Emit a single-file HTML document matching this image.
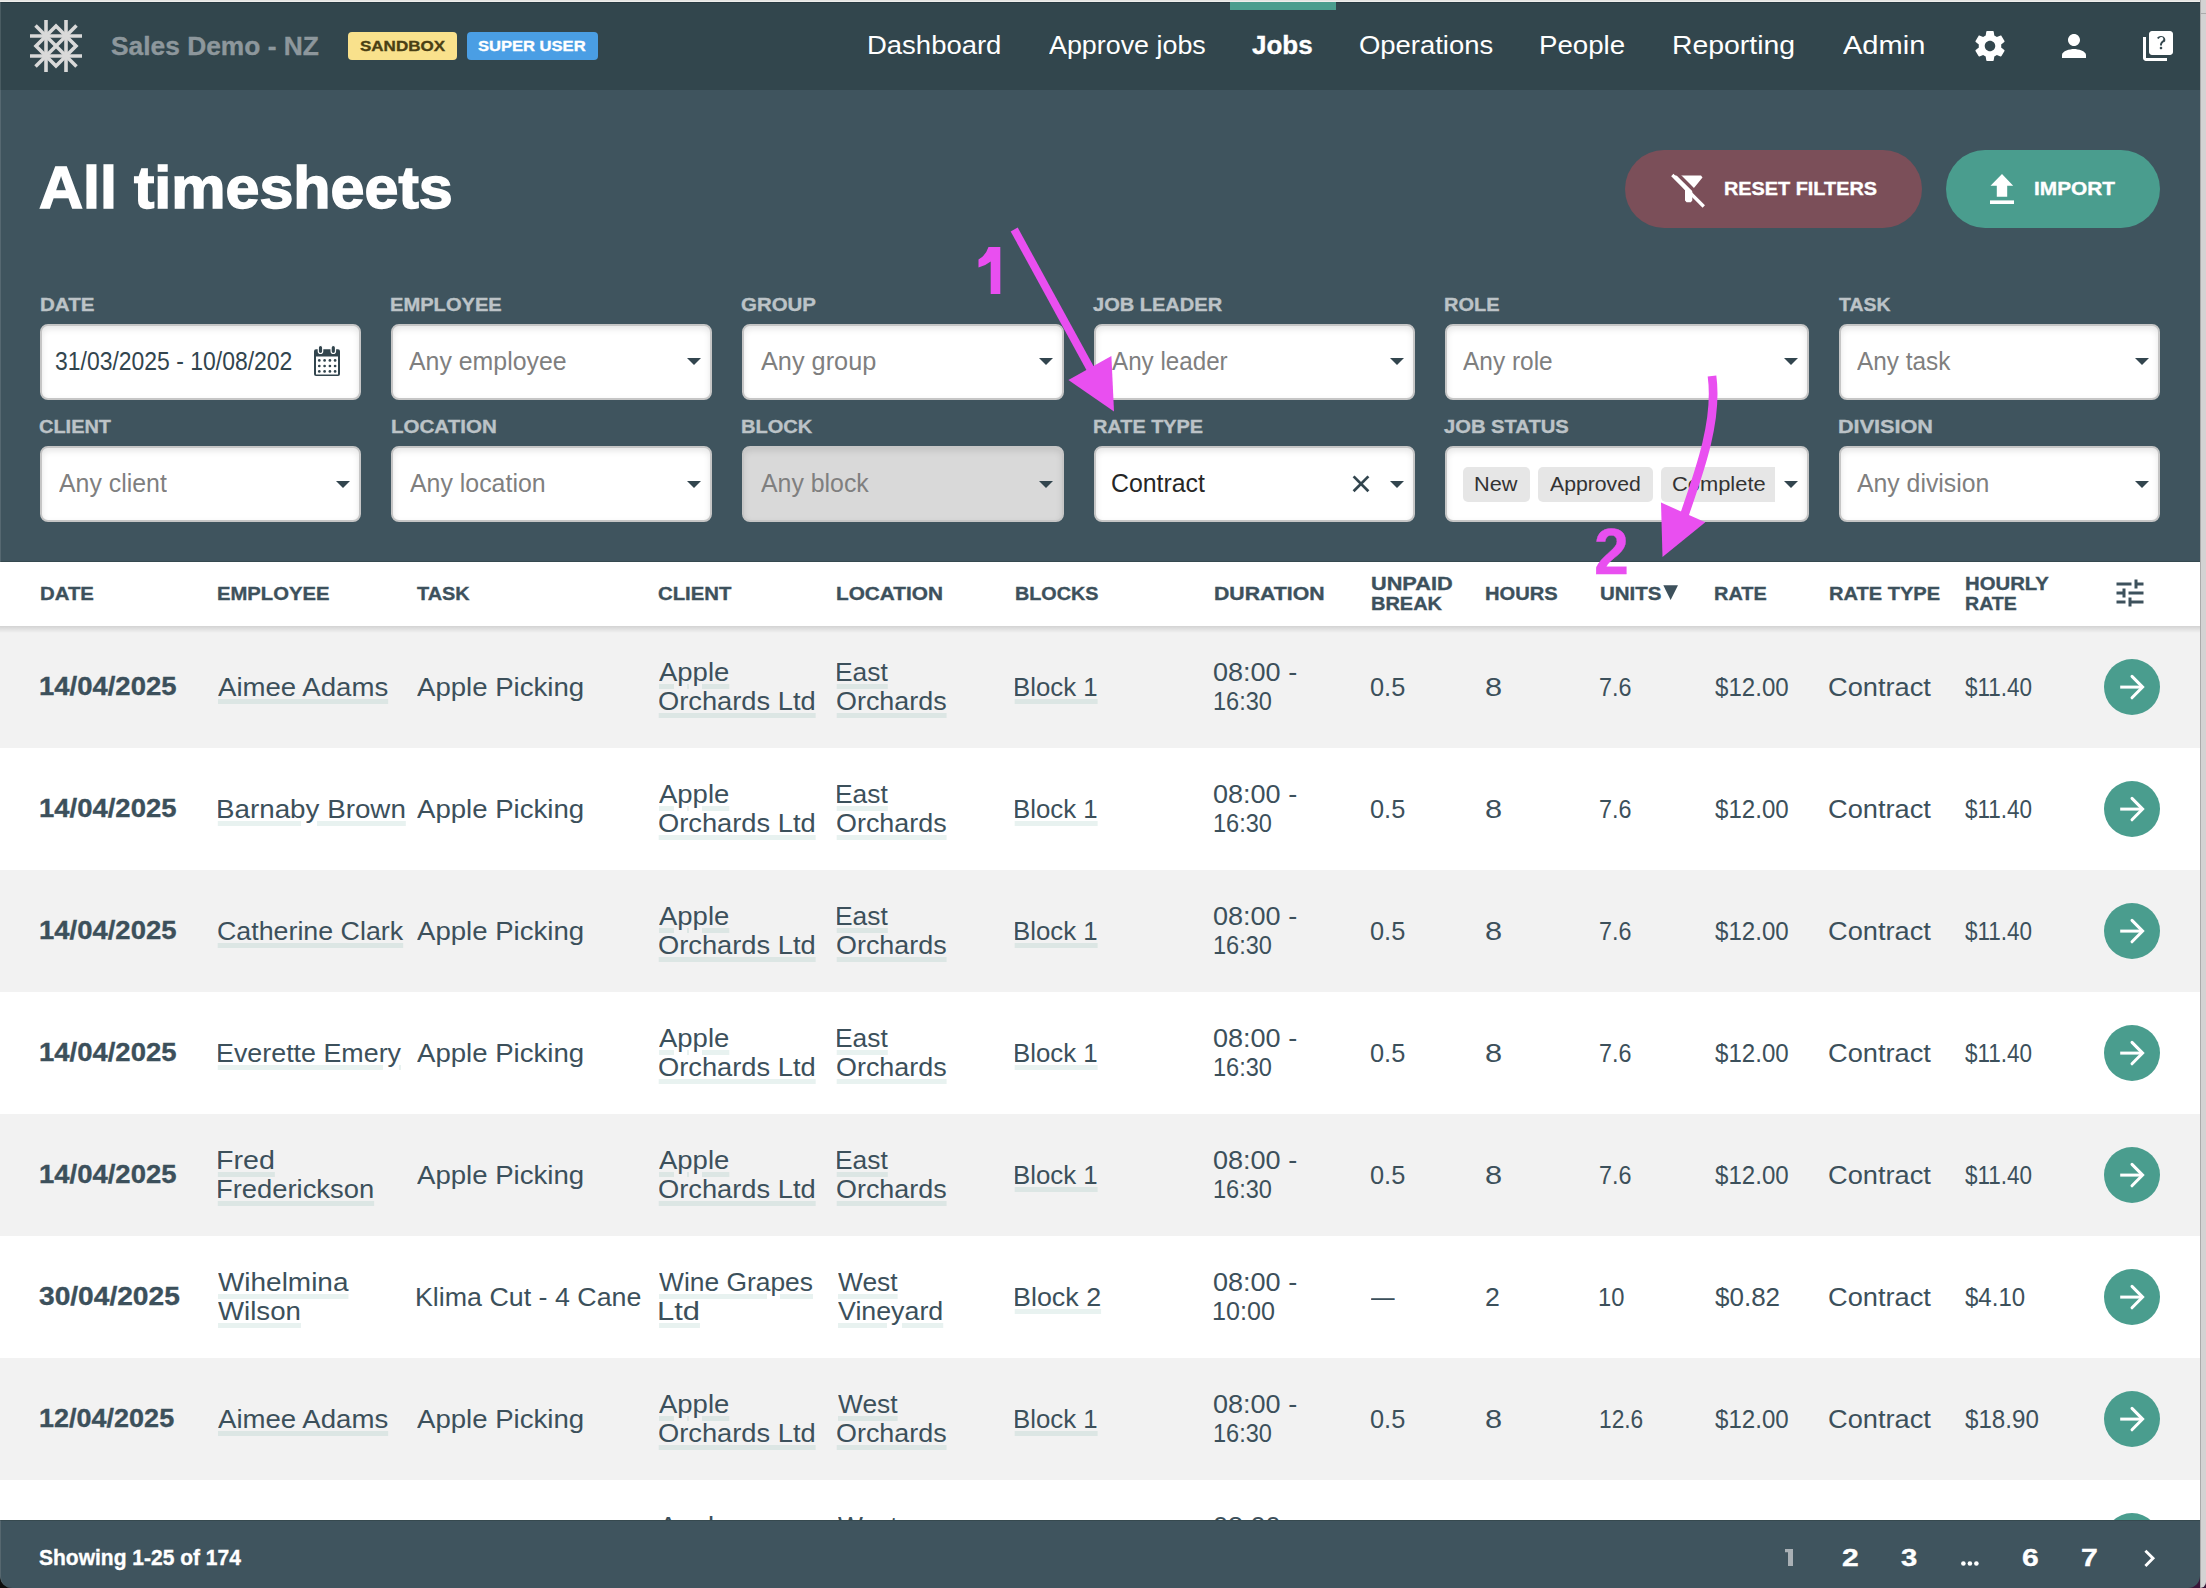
<!DOCTYPE html>
<html><head><meta charset="utf-8"><title>All timesheets</title>
<style>
html,body{margin:0;padding:0}
body{width:2206px;height:1588px;overflow:hidden;position:relative;background:#ffffff;font-family:"Liberation Sans",sans-serif}
div,svg{position:absolute;box-sizing:border-box}
.t{white-space:pre;line-height:1em;transform-origin:0 0}
.box{background:#fff;border:2px solid #c6c6c6;border-radius:8px;box-shadow:inset 0 3px 6px rgba(0,0,0,0.10)}
.caret{width:0;height:0;border-left:7px solid transparent;border-right:7px solid transparent;border-top:7.5px solid #32454e}
.chip{background:#e6e6e6;border-radius:5px;top:467px;height:35px}
.row{left:0;width:2200px;height:122px}
.go{width:56px;height:56px;border-radius:50%;background:#4a9d8e;left:2104px}
</style></head><body>
<div style="left:0;top:0;width:2206px;height:1px;background:#e4e4e2"></div>
<div style="left:0;top:1px;width:2206px;height:1px;background:#efefed"></div>
<div style="left:0;top:2px;width:2200px;height:88px;background:#32464d;border-top:1px solid #283a42"></div>
<div style="left:1230px;top:2px;width:106px;height:8px;background:#4a9d8e"></div>
<div style="left:0;top:90px;width:2200px;height:472px;background:#3f545e"></div>
<svg style="left:0;top:0" width="100" height="90" viewBox="0 0 100 90"><g stroke="#d9d9d9" stroke-width="3.6" fill="none" stroke-linecap="butt"><line x1="46" y1="20" x2="46" y2="72"/><line x1="66" y1="20" x2="66" y2="72"/><line x1="30" y1="36" x2="82" y2="36"/><line x1="30" y1="56" x2="82" y2="56"/><line x1="35.5" y1="25.5" x2="76.5" y2="66.5"/><line x1="76.5" y1="25.5" x2="35.5" y2="66.5"/><polygon points="56,26 76,46 56,66 36,46"/></g></svg>
<div style="left:348px;top:32px;width:109px;height:28px;background:#f9e18c;border-radius:4px"></div>
<div style="left:467px;top:32px;width:131px;height:28px;background:#4a9ee4;border-radius:4px"></div>
<svg style="left:1972px;top:28px" width="36" height="36" viewBox="0 0 24 24"><path fill="#fff" d="M19.43 12.98c.04-.32.07-.64.07-.98s-.03-.66-.07-.98l2.11-1.65c.19-.15.24-.42.12-.64l-2-3.46c-.12-.22-.39-.3-.61-.22l-2.49 1c-.52-.4-1.08-.73-1.69-.98l-.38-2.65C14.46 2.18 14.25 2 14 2h-4c-.25 0-.46.18-.49.42l-.38 2.65c-.61.25-1.17.59-1.69.98l-2.49-1c-.23-.09-.49 0-.61.22l-2 3.46c-.13.22-.07.49.12.64l2.11 1.65c-.04.32-.07.65-.07.98s.03.66.07.98l-2.11 1.65c-.19.15-.24.42-.12.64l2 3.46c.12.22.39.3.61.22l2.49-1c.52.4 1.08.73 1.69.98l.38 2.65c.03.24.24.42.49.42h4c.25 0 .46-.18.49-.42l.38-2.65c.61-.25 1.17-.59 1.69-.98l2.49 1c.23.09.49 0 .61-.22l2-3.46c.12-.22.07-.49-.12-.64l-2.11-1.65zM12 15.5c-1.93 0-3.5-1.57-3.5-3.5s1.57-3.5 3.5-3.5 3.5 1.57 3.5 3.5-1.57 3.5-3.5 3.5z"/></svg>
<svg style="left:2056px;top:28px" width="36" height="36" viewBox="0 0 24 24"><path fill="#fff" d="M12 12c2.21 0 4-1.79 4-4s-1.79-4-4-4-4 1.79-4 4 1.79 4 4 4zm0 2c-2.67 0-8 1.34-8 4v2h16v-2c0-2.66-5.33-4-8-4z"/></svg>
<svg style="left:2140px;top:28px" width="36" height="36" viewBox="0 0 24 24"><path fill="#fff" d="M4 6H2v14c0 1.1.9 2 2 2h14v-2H4V6z"/><path fill="#fff" d="M20 2H8c-1.1 0-2 .9-2 2v12c0 1.1.9 2 2 2h12c1.1 0 2-.9 2-2V4c0-1.1-.9-2-2-2z"/><g transform="translate(14 9.9) scale(0.84) translate(-14 -9.9)"><path fill="#32464d" d="M14.01 15c-.59 0-1.05-.47-1.05-1.05 0-.59.47-1.04 1.05-1.04.59 0 1.04.45 1.04 1.04-.01.58-.45 1.05-1.04 1.05z"/><path fill="#32464d" d="M16.51 8.83c-.63.93-1.23 1.21-1.56 1.81-.13.24-.18.4-.18 1.38h-1.52c0-.51-.08-1.35.33-2.07.51-.91 1.48-1.45 2.04-2.25.59-.84.26-2.43-1.42-2.43-1.1 0-1.64.83-1.87 1.52l-1.54-.65C11.08 5.64 12.24 4.5 14 4.5c1.47 0 2.49.67 3 1.5.44.72.69 2.07.01 3.33z"/></g></svg>
<div style="left:1625px;top:150px;width:297px;height:77.5px;border-radius:39px;background:#7b4f59"></div>
<div style="left:1946px;top:150px;width:214px;height:77.5px;border-radius:39px;background:#4a9d8e"></div>
<svg style="left:1660px;top:165px" width="60" height="50" viewBox="1660 165 60 50"><polygon fill="#fff" points="1673,175.5 1701,175.5 1702.5,177.5 1692.3,190 1692.3,200.5 1690.8,202.3 1686.6,202.3 1685,200.5 1685,190"/><line x1="1675.8" y1="172.2" x2="1705.5" y2="201.9" stroke="#7b4f59" stroke-width="3.4"/><line x1="1673.5" y1="176.2" x2="1702.6" y2="205.3" stroke="#fff" stroke-width="3.3" stroke-linecap="square"/></svg>
<svg style="left:1980px;top:165px" width="50" height="50" viewBox="1980 165 50 50"><g fill="#fff"><polygon points="2002,174 2013.2,185.8 2007.2,185.8 2007.2,196.8 1996.8,196.8 1996.8,185.8 1990.5,185.8"/><rect x="1990" y="200.4" width="24" height="3.6"/></g></svg>
<div class="box" style="left:40px;top:324px;width:321px;height:76px"></div>
<div class="box" style="left:40px;top:446px;width:321px;height:76px;background:#fff"></div>
<div class="caret" style="left:336.3px;top:481px"></div>
<div class="box" style="left:391px;top:324px;width:321px;height:76px"></div>
<div class="box" style="left:391px;top:446px;width:321px;height:76px;background:#fff"></div>
<div class="caret" style="left:687.3px;top:358px"></div>
<div class="caret" style="left:687.3px;top:481px"></div>
<div class="box" style="left:742px;top:324px;width:322px;height:76px"></div>
<div class="box" style="left:742px;top:446px;width:322px;height:76px;background:#d9d9d9"></div>
<div class="caret" style="left:1039.3px;top:358px"></div>
<div class="caret" style="left:1039.3px;top:481px"></div>
<div class="box" style="left:1094px;top:324px;width:321px;height:76px"></div>
<div class="box" style="left:1094px;top:446px;width:321px;height:76px;background:#fff"></div>
<div class="caret" style="left:1390.3px;top:358px"></div>
<div class="caret" style="left:1390.3px;top:481px"></div>
<div class="box" style="left:1445px;top:324px;width:364px;height:76px"></div>
<div class="box" style="left:1445px;top:446px;width:364px;height:76px;background:#fff"></div>
<div class="caret" style="left:1784.3px;top:358px"></div>
<div class="caret" style="left:1784.3px;top:481px"></div>
<div class="box" style="left:1839px;top:324px;width:321px;height:76px"></div>
<div class="box" style="left:1839px;top:446px;width:321px;height:76px;background:#fff"></div>
<div class="caret" style="left:2135.3px;top:358px"></div>
<div class="caret" style="left:2135.3px;top:481px"></div>
<svg style="left:310px;top:343px" width="36" height="38" viewBox="310 343 36 38"><rect x="314" y="349.2" width="26" height="26.8" rx="2" fill="#32454e"/><rect x="316" y="356.5" width="22" height="18" fill="#fff"/><rect x="318.3" y="345.5" width="4.4" height="8" rx="2.2" fill="#32454e" stroke="#fff" stroke-width="1.2"/><rect x="331.1" y="345.5" width="4.4" height="8" rx="2.2" fill="#32454e" stroke="#fff" stroke-width="1.2"/><circle cx="319.3" cy="360.4" r="1.35" fill="#32454e"/><circle cx="319.3" cy="366" r="1.35" fill="#32454e"/><circle cx="319.3" cy="371.4" r="1.35" fill="#32454e"/><circle cx="324.6" cy="360.4" r="1.35" fill="#32454e"/><circle cx="324.6" cy="366" r="1.35" fill="#32454e"/><circle cx="324.6" cy="371.4" r="1.35" fill="#32454e"/><circle cx="329.9" cy="360.4" r="1.35" fill="#32454e"/><circle cx="329.9" cy="366" r="1.35" fill="#32454e"/><circle cx="329.9" cy="371.4" r="1.35" fill="#32454e"/><circle cx="335.1" cy="360.4" r="1.35" fill="#32454e"/><circle cx="335.1" cy="366" r="1.35" fill="#32454e"/><circle cx="335.1" cy="371.4" r="1.35" fill="#32454e"/></svg>
<svg style="left:1350px;top:473px" width="22" height="22" viewBox="1350 473 22 22"><g stroke="#32454e" stroke-width="2.7"><line x1="1353.6" y1="476.4" x2="1368.4" y2="491.2"/><line x1="1368.4" y1="476.4" x2="1353.6" y2="491.2"/></g></svg>
<div class="chip" style="left:1463px;width:66.5px"></div>
<div class="chip" style="left:1538px;width:114.5px"></div>
<div class="chip" style="left:1661.4px;width:113.6px;border-radius:5px 0 0 5px"></div>
<div style="left:0;top:561px;width:2200px;height:1px;background:#35494f"></div>
<div style="left:0;top:2px;width:1px;height:560px;background:rgba(255,255,255,0.12)"></div>
<div style="left:0;top:562px;width:2200px;height:64px;background:#fff"></div>
<div class="row" style="top:626px;background:#f2f2f2"></div>
<div class="row" style="top:748px;background:#ffffff"></div>
<div class="row" style="top:870px;background:#f2f2f2"></div>
<div class="row" style="top:992px;background:#ffffff"></div>
<div class="row" style="top:1114px;background:#f2f2f2"></div>
<div class="row" style="top:1236px;background:#ffffff"></div>
<div class="row" style="top:1358px;background:#f2f2f2"></div>
<div class="row" style="top:1480px;background:#ffffff"></div>
<div style="left:0;top:626px;width:2200px;height:7px;background:linear-gradient(rgba(0,0,0,0.13),rgba(0,0,0,0))"></div>
<svg style="left:1660px;top:582px" width="22" height="22" viewBox="1660 582 22 22"><polygon fill="#3d515c" points="1663.3,585.2 1678,585.2 1670.6,600"/></svg>
<svg style="left:2112.3px;top:574.8px" width="36" height="36" viewBox="0 0 24 24"><path fill="#3d515c" d="M3 17v2h6v-2H3zM3 5v2h10V5H3zm10 16v-2h8v-2h-8v-2h-2v6h2zM7 9v2H3v2h4v2h2V9H7zm14 4v-2H11v2h10zm-6-4h2V7h4V5h-4V3h-2v6z"/></svg>
<div class="go" style="top:659px"></div>
<svg style="left:2110px;top:665px" width="44" height="44" viewBox="2110 665 44 44"><path fill="none" stroke="#fff" stroke-width="3" stroke-linecap="round" stroke-linejoin="miter" d="M2132 676.4 L2142.6 687.1 L2132 697.8"/><path stroke="#fff" stroke-width="3" d="M2120.2 687.1 H2141.5"/></svg>
<div class="go" style="top:781px"></div>
<svg style="left:2110px;top:787px" width="44" height="44" viewBox="2110 787 44 44"><path fill="none" stroke="#fff" stroke-width="3" stroke-linecap="round" stroke-linejoin="miter" d="M2132 798.4 L2142.6 809.1 L2132 819.8"/><path stroke="#fff" stroke-width="3" d="M2120.2 809.1 H2141.5"/></svg>
<div class="go" style="top:903px"></div>
<svg style="left:2110px;top:909px" width="44" height="44" viewBox="2110 909 44 44"><path fill="none" stroke="#fff" stroke-width="3" stroke-linecap="round" stroke-linejoin="miter" d="M2132 920.4 L2142.6 931.1 L2132 941.8"/><path stroke="#fff" stroke-width="3" d="M2120.2 931.1 H2141.5"/></svg>
<div class="go" style="top:1025px"></div>
<svg style="left:2110px;top:1031px" width="44" height="44" viewBox="2110 1031 44 44"><path fill="none" stroke="#fff" stroke-width="3" stroke-linecap="round" stroke-linejoin="miter" d="M2132 1042.4 L2142.6 1053.1 L2132 1063.8"/><path stroke="#fff" stroke-width="3" d="M2120.2 1053.1 H2141.5"/></svg>
<div class="go" style="top:1147px"></div>
<svg style="left:2110px;top:1153px" width="44" height="44" viewBox="2110 1153 44 44"><path fill="none" stroke="#fff" stroke-width="3" stroke-linecap="round" stroke-linejoin="miter" d="M2132 1164.4 L2142.6 1175.1 L2132 1185.8"/><path stroke="#fff" stroke-width="3" d="M2120.2 1175.1 H2141.5"/></svg>
<div class="go" style="top:1269px"></div>
<svg style="left:2110px;top:1275px" width="44" height="44" viewBox="2110 1275 44 44"><path fill="none" stroke="#fff" stroke-width="3" stroke-linecap="round" stroke-linejoin="miter" d="M2132 1286.4 L2142.6 1297.1 L2132 1307.8"/><path stroke="#fff" stroke-width="3" d="M2120.2 1297.1 H2141.5"/></svg>
<div class="go" style="top:1391px"></div>
<svg style="left:2110px;top:1397px" width="44" height="44" viewBox="2110 1397 44 44"><path fill="none" stroke="#fff" stroke-width="3" stroke-linecap="round" stroke-linejoin="miter" d="M2132 1408.4 L2142.6 1419.1 L2132 1429.8"/><path stroke="#fff" stroke-width="3" d="M2120.2 1419.1 H2141.5"/></svg>
<div class="go" style="top:1513px"></div>
<svg style="left:2110px;top:1519px" width="44" height="44" viewBox="2110 1519 44 44"><path fill="none" stroke="#fff" stroke-width="3" stroke-linecap="round" stroke-linejoin="miter" d="M2132 1530.4 L2142.6 1541.1 L2132 1551.8"/><path stroke="#fff" stroke-width="3" d="M2120.2 1541.1 H2141.5"/></svg>
<div class="t" style="left:110.95px;top:34.0px;font-size:25px;font-weight:700;color:#8d979c;transform:scaleX(1.0536);-webkit-text-stroke:0.35px #8d979c;">Sales Demo - NZ</div>
<div class="t" style="left:360.00px;top:38.1px;font-size:15px;font-weight:700;color:#4a3f14;transform:scaleX(1.1333);-webkit-text-stroke:0.35px #4a3f14;">SANDBOX</div>
<div class="t" style="left:478.10px;top:38.1px;font-size:15px;font-weight:700;color:#ffffff;transform:scaleX(1.1031);-webkit-text-stroke:0.35px #ffffff;">SUPER USER</div>
<div class="t" style="left:866.89px;top:32.4px;font-size:26px;font-weight:400;color:#ffffff;transform:scaleX(1.0565);">Dashboard</div>
<div class="t" style="left:1049.00px;top:32.4px;font-size:26px;font-weight:400;color:#ffffff;transform:scaleX(1.0331);">Approve jobs</div>
<div class="t" style="left:1252.00px;top:32.4px;font-size:26px;font-weight:700;color:#ffffff;-webkit-text-stroke:0.35px #ffffff;">Jobs</div>
<div class="t" style="left:1359.34px;top:32.4px;font-size:26px;font-weight:400;color:#ffffff;transform:scaleX(1.0552);">Operations</div>
<div class="t" style="left:1538.87px;top:32.4px;font-size:26px;font-weight:400;color:#ffffff;transform:scaleX(1.0641);">People</div>
<div class="t" style="left:1671.82px;top:32.4px;font-size:26px;font-weight:400;color:#ffffff;transform:scaleX(1.0917);">Reporting</div>
<div class="t" style="left:1842.60px;top:32.4px;font-size:26px;font-weight:400;color:#ffffff;transform:scaleX(1.1167);">Admin</div>
<div class="t" style="left:38.90px;top:158.8px;font-size:59px;font-weight:700;color:#ffffff;transform:scaleX(1.0343);-webkit-text-stroke:1.5px #fff;">All timesheets</div>
<div class="t" style="left:1724.47px;top:179.4px;font-size:19.2px;font-weight:700;color:#ffffff;transform:scaleX(1.0349);-webkit-text-stroke:0.35px #ffffff;">RESET FILTERS</div>
<div class="t" style="left:2034.31px;top:179.4px;font-size:19.2px;font-weight:700;color:#ffffff;transform:scaleX(1.0851);-webkit-text-stroke:0.35px #ffffff;">IMPORT</div>
<div class="t" style="left:39.52px;top:294.7px;font-size:19px;font-weight:700;color:#bcc3c7;transform:scaleX(1.0816);-webkit-text-stroke:0.35px #bcc3c7;">DATE</div>
<div class="t" style="left:390.24px;top:294.7px;font-size:19px;font-weight:700;color:#bcc3c7;transform:scaleX(1.0587);-webkit-text-stroke:0.35px #bcc3c7;">EMPLOYEE</div>
<div class="t" style="left:741.42px;top:294.7px;font-size:19px;font-weight:700;color:#bcc3c7;transform:scaleX(1.0750);-webkit-text-stroke:0.35px #bcc3c7;">GROUP</div>
<div class="t" style="left:1093.35px;top:294.7px;font-size:19px;font-weight:700;color:#bcc3c7;transform:scaleX(1.0545);-webkit-text-stroke:0.35px #bcc3c7;">JOB LEADER</div>
<div class="t" style="left:1443.95px;top:294.7px;font-size:19px;font-weight:700;color:#bcc3c7;transform:scaleX(1.0510);-webkit-text-stroke:0.35px #bcc3c7;">ROLE</div>
<div class="t" style="left:1839.20px;top:294.7px;font-size:19px;font-weight:700;color:#bcc3c7;transform:scaleX(1.0220);-webkit-text-stroke:0.35px #bcc3c7;">TASK</div>
<div class="t" style="left:39.45px;top:417.4px;font-size:19px;font-weight:700;color:#bcc3c7;transform:scaleX(1.0500);-webkit-text-stroke:0.35px #bcc3c7;">CLIENT</div>
<div class="t" style="left:390.72px;top:417.4px;font-size:19px;font-weight:700;color:#bcc3c7;transform:scaleX(1.0813);-webkit-text-stroke:0.35px #bcc3c7;">LOCATION</div>
<div class="t" style="left:741.44px;top:417.4px;font-size:19px;font-weight:700;color:#bcc3c7;transform:scaleX(1.0561);-webkit-text-stroke:0.35px #bcc3c7;">BLOCK</div>
<div class="t" style="left:1093.35px;top:417.4px;font-size:19px;font-weight:700;color:#bcc3c7;transform:scaleX(1.0462);-webkit-text-stroke:0.35px #bcc3c7;">RATE TYPE</div>
<div class="t" style="left:1443.74px;top:417.4px;font-size:19px;font-weight:700;color:#bcc3c7;transform:scaleX(1.0612);-webkit-text-stroke:0.35px #bcc3c7;">JOB STATUS</div>
<div class="t" style="left:1837.86px;top:417.4px;font-size:19px;font-weight:700;color:#bcc3c7;transform:scaleX(1.1383);-webkit-text-stroke:0.35px #bcc3c7;">DIVISION</div>
<div class="t" style="left:54.60px;top:349.2px;font-size:25.6px;font-weight:400;color:#32454e;transform:scaleX(0.8966);">31/03/2025 - 10/08/202</div>
<div class="t" style="left:409.40px;top:349.2px;font-size:25.6px;font-weight:400;color:#7f7f7f;transform:scaleX(0.9720);">Any employee</div>
<div class="t" style="left:760.50px;top:349.2px;font-size:25.6px;font-weight:400;color:#7f7f7f;transform:scaleX(0.9879);">Any group</div>
<div class="t" style="left:1112.40px;top:349.2px;font-size:25.6px;font-weight:400;color:#7f7f7f;transform:scaleX(0.9451);">Any leader</div>
<div class="t" style="left:1462.80px;top:349.2px;font-size:25.6px;font-weight:400;color:#7f7f7f;transform:scaleX(0.9548);">Any role</div>
<div class="t" style="left:1856.70px;top:349.2px;font-size:25.6px;font-weight:400;color:#7f7f7f;transform:scaleX(0.9510);">Any task</div>
<div class="t" style="left:58.60px;top:471.3px;font-size:25.6px;font-weight:400;color:#7f7f7f;transform:scaleX(0.9721);">Any client</div>
<div class="t" style="left:409.90px;top:471.3px;font-size:25.6px;font-weight:400;color:#7f7f7f;transform:scaleX(0.9725);">Any location</div>
<div class="t" style="left:760.50px;top:471.3px;font-size:25.6px;font-weight:400;color:#7f7f7f;transform:scaleX(0.9712);">Any block</div>
<div class="t" style="left:1111.43px;top:471.3px;font-size:25.6px;font-weight:400;color:#262626;transform:scaleX(0.9708);">Contract</div>
<div class="t" style="left:1856.70px;top:471.3px;font-size:25.6px;font-weight:400;color:#7f7f7f;transform:scaleX(0.9689);">Any division</div>
<div class="t" style="left:1473.82px;top:475.2px;font-size:19.9px;font-weight:400;color:#333333;transform:scaleX(1.0921);">New</div>
<div class="t" style="left:1550.25px;top:475.2px;font-size:19.9px;font-weight:400;color:#333333;transform:scaleX(1.0664);">Approved</div>
<div class="t" style="left:1672.32px;top:475.2px;font-size:19.9px;font-weight:400;color:#333333;transform:scaleX(1.1000);">Complete</div>
<div class="t" style="left:39.62px;top:585.0px;font-size:18.9px;font-weight:700;color:#3d515c;transform:scaleX(1.0776);-webkit-text-stroke:0.35px #3d515c;">DATE</div>
<div class="t" style="left:217.33px;top:585.0px;font-size:18.9px;font-weight:700;color:#3d515c;transform:scaleX(1.0709);-webkit-text-stroke:0.35px #3d515c;">EMPLOYEE</div>
<div class="t" style="left:417.00px;top:585.0px;font-size:18.9px;font-weight:700;color:#3d515c;transform:scaleX(1.0520);-webkit-text-stroke:0.35px #3d515c;">TASK</div>
<div class="t" style="left:658.12px;top:585.0px;font-size:18.9px;font-weight:700;color:#3d515c;transform:scaleX(1.0761);-webkit-text-stroke:0.35px #3d515c;">CLIENT</div>
<div class="t" style="left:836.30px;top:585.0px;font-size:18.9px;font-weight:700;color:#3d515c;transform:scaleX(1.1000);-webkit-text-stroke:0.35px #3d515c;">LOCATION</div>
<div class="t" style="left:1014.75px;top:585.0px;font-size:18.9px;font-weight:700;color:#3d515c;transform:scaleX(1.0462);-webkit-text-stroke:0.35px #3d515c;">BLOCKS</div>
<div class="t" style="left:1213.88px;top:585.0px;font-size:18.9px;font-weight:700;color:#3d515c;transform:scaleX(1.1250);-webkit-text-stroke:0.35px #3d515c;">DURATION</div>
<div class="t" style="left:1485.43px;top:585.0px;font-size:18.9px;font-weight:700;color:#3d515c;transform:scaleX(1.0657);-webkit-text-stroke:0.35px #3d515c;">HOURS</div>
<div class="t" style="left:1599.92px;top:585.0px;font-size:18.9px;font-weight:700;color:#3d515c;transform:scaleX(1.0836);-webkit-text-stroke:0.35px #3d515c;">UNITS</div>
<div class="t" style="left:1713.94px;top:585.0px;font-size:18.9px;font-weight:700;color:#3d515c;transform:scaleX(1.0551);-webkit-text-stroke:0.35px #3d515c;">RATE</div>
<div class="t" style="left:1828.54px;top:585.0px;font-size:18.9px;font-weight:700;color:#3d515c;transform:scaleX(1.0621);-webkit-text-stroke:0.35px #3d515c;">RATE TYPE</div>
<div class="t" style="left:1370.75px;top:575.4px;font-size:18.9px;font-weight:700;color:#3d515c;transform:scaleX(1.1493);-webkit-text-stroke:0.35px #3d515c;">UNPAID</div>
<div class="t" style="left:1370.84px;top:595.0px;font-size:18.9px;font-weight:700;color:#3d515c;transform:scaleX(1.0576);-webkit-text-stroke:0.35px #3d515c;">BREAK</div>
<div class="t" style="left:1964.62px;top:575.4px;font-size:18.9px;font-weight:700;color:#3d515c;transform:scaleX(1.0753);-webkit-text-stroke:0.35px #3d515c;">HOURLY</div>
<div class="t" style="left:1964.66px;top:595.0px;font-size:18.9px;font-weight:700;color:#3d515c;transform:scaleX(1.0366);-webkit-text-stroke:0.35px #3d515c;">RATE</div>
<div class="t" style="left:38.93px;top:674.2px;font-size:25.6px;font-weight:700;color:#3c505b;transform:scaleX(1.0732);-webkit-text-stroke:0.35px #3c505b;">14/04/2025</div>
<div class="t" style="left:218.00px;top:675.0px;font-size:25.6px;font-weight:400;color:#3c505b;transform:scaleX(1.0777);clip-path:inset(-20px -20px -20px 0.0px);text-decoration:underline;text-decoration-thickness:5px;text-underline-offset:3px;text-decoration-color:rgba(74,157,141,0.13);">Aimee Adams</div>
<div class="t" style="left:417.30px;top:675.0px;font-size:25.6px;font-weight:400;color:#3c505b;transform:scaleX(1.0779);">Apple Picking</div>
<div class="t" style="left:659.00px;top:660.2px;font-size:25.6px;font-weight:400;color:#3c505b;transform:scaleX(1.0738);clip-path:inset(-20px -20px -20px 0.0px);text-decoration:underline;text-decoration-thickness:5px;text-underline-offset:3px;text-decoration-color:rgba(74,157,141,0.13);">Apple</div>
<div class="t" style="left:657.93px;top:689.0px;font-size:25.6px;font-weight:400;color:#3c505b;transform:scaleX(1.0658);clip-path:inset(-20px -20px -20px 0.7px);text-decoration:underline;text-decoration-thickness:5px;text-underline-offset:3px;text-decoration-color:rgba(74,157,141,0.13);">Orchards Ltd</div>
<div class="t" style="left:835.44px;top:660.2px;font-size:25.6px;font-weight:400;color:#3c505b;transform:scaleX(1.0306);clip-path:inset(-20px -20px -20px 1.7px);text-decoration:underline;text-decoration-thickness:5px;text-underline-offset:3px;text-decoration-color:rgba(74,157,141,0.13);">East</div>
<div class="t" style="left:836.45px;top:689.0px;font-size:25.6px;font-weight:400;color:#3c505b;transform:scaleX(1.0510);clip-path:inset(-20px -20px -20px 0.7px);text-decoration:underline;text-decoration-thickness:5px;text-underline-offset:3px;text-decoration-color:rgba(74,157,141,0.13);">Orchards</div>
<div class="t" style="left:1013.28px;top:675.0px;font-size:25.6px;font-weight:400;color:#3c505b;transform:scaleX(1.0086);clip-path:inset(-20px -20px -20px 1.7px);text-decoration:underline;text-decoration-thickness:5px;text-underline-offset:3px;text-decoration-color:rgba(74,157,141,0.13);">Block 1</div>
<div class="t" style="left:1213.34px;top:660.2px;font-size:25.6px;font-weight:400;color:#3c505b;transform:scaleX(1.0564);">08:00 -</div>
<div class="t" style="left:1212.56px;top:689.0px;font-size:25.6px;font-weight:400;color:#3c505b;transform:scaleX(0.9197);">16:30</div>
<div class="t" style="left:1370.31px;top:675.0px;font-size:25.6px;font-weight:400;color:#3c505b;transform:scaleX(0.9912);">0.5</div>
<div class="t" style="left:1484.80px;top:675.0px;font-size:25.6px;font-weight:400;color:#3c505b;transform:scaleX(1.2000);">8</div>
<div class="t" style="left:1599.39px;top:675.0px;font-size:25.6px;font-weight:400;color:#3c505b;transform:scaleX(0.9118);">7.6</div>
<div class="t" style="left:1714.80px;top:675.0px;font-size:25.6px;font-weight:400;color:#3c505b;transform:scaleX(0.9416);">$12.00</div>
<div class="t" style="left:1965.00px;top:675.0px;font-size:25.6px;font-weight:400;color:#3c505b;transform:scaleX(0.8789);">$11.40</div>
<div class="t" style="left:1828.14px;top:675.0px;font-size:25.6px;font-weight:400;color:#3c505b;transform:scaleX(1.0635);">Contract</div>
<div class="t" style="left:38.93px;top:796.2px;font-size:25.6px;font-weight:700;color:#3c505b;transform:scaleX(1.0732);-webkit-text-stroke:0.35px #3c505b;">14/04/2025</div>
<div class="t" style="left:215.83px;top:797.0px;font-size:25.6px;font-weight:400;color:#3c505b;transform:scaleX(1.0849);clip-path:inset(-20px -20px -20px 1.7px);text-decoration:underline;text-decoration-thickness:5px;text-underline-offset:3px;text-decoration-color:rgba(74,157,141,0.13);">Barnaby Brown</div>
<div class="t" style="left:417.30px;top:797.0px;font-size:25.6px;font-weight:400;color:#3c505b;transform:scaleX(1.0779);">Apple Picking</div>
<div class="t" style="left:659.00px;top:782.2px;font-size:25.6px;font-weight:400;color:#3c505b;transform:scaleX(1.0738);clip-path:inset(-20px -20px -20px 0.0px);text-decoration:underline;text-decoration-thickness:5px;text-underline-offset:3px;text-decoration-color:rgba(74,157,141,0.13);">Apple</div>
<div class="t" style="left:657.93px;top:811.0px;font-size:25.6px;font-weight:400;color:#3c505b;transform:scaleX(1.0658);clip-path:inset(-20px -20px -20px 0.7px);text-decoration:underline;text-decoration-thickness:5px;text-underline-offset:3px;text-decoration-color:rgba(74,157,141,0.13);">Orchards Ltd</div>
<div class="t" style="left:835.44px;top:782.2px;font-size:25.6px;font-weight:400;color:#3c505b;transform:scaleX(1.0306);clip-path:inset(-20px -20px -20px 1.7px);text-decoration:underline;text-decoration-thickness:5px;text-underline-offset:3px;text-decoration-color:rgba(74,157,141,0.13);">East</div>
<div class="t" style="left:836.45px;top:811.0px;font-size:25.6px;font-weight:400;color:#3c505b;transform:scaleX(1.0510);clip-path:inset(-20px -20px -20px 0.7px);text-decoration:underline;text-decoration-thickness:5px;text-underline-offset:3px;text-decoration-color:rgba(74,157,141,0.13);">Orchards</div>
<div class="t" style="left:1013.28px;top:797.0px;font-size:25.6px;font-weight:400;color:#3c505b;transform:scaleX(1.0086);clip-path:inset(-20px -20px -20px 1.7px);text-decoration:underline;text-decoration-thickness:5px;text-underline-offset:3px;text-decoration-color:rgba(74,157,141,0.13);">Block 1</div>
<div class="t" style="left:1213.34px;top:782.2px;font-size:25.6px;font-weight:400;color:#3c505b;transform:scaleX(1.0564);">08:00 -</div>
<div class="t" style="left:1212.56px;top:811.0px;font-size:25.6px;font-weight:400;color:#3c505b;transform:scaleX(0.9197);">16:30</div>
<div class="t" style="left:1370.31px;top:797.0px;font-size:25.6px;font-weight:400;color:#3c505b;transform:scaleX(0.9912);">0.5</div>
<div class="t" style="left:1484.80px;top:797.0px;font-size:25.6px;font-weight:400;color:#3c505b;transform:scaleX(1.2000);">8</div>
<div class="t" style="left:1599.39px;top:797.0px;font-size:25.6px;font-weight:400;color:#3c505b;transform:scaleX(0.9118);">7.6</div>
<div class="t" style="left:1714.80px;top:797.0px;font-size:25.6px;font-weight:400;color:#3c505b;transform:scaleX(0.9416);">$12.00</div>
<div class="t" style="left:1965.00px;top:797.0px;font-size:25.6px;font-weight:400;color:#3c505b;transform:scaleX(0.8789);">$11.40</div>
<div class="t" style="left:1828.14px;top:797.0px;font-size:25.6px;font-weight:400;color:#3c505b;transform:scaleX(1.0635);">Contract</div>
<div class="t" style="left:38.93px;top:918.2px;font-size:25.6px;font-weight:700;color:#3c505b;transform:scaleX(1.0732);-webkit-text-stroke:0.35px #3c505b;">14/04/2025</div>
<div class="t" style="left:216.95px;top:919.0px;font-size:25.6px;font-weight:400;color:#3c505b;transform:scaleX(1.0469);clip-path:inset(-20px -20px -20px 0.7px);text-decoration:underline;text-decoration-thickness:5px;text-underline-offset:3px;text-decoration-color:rgba(74,157,141,0.13);">Catherine Clark</div>
<div class="t" style="left:417.30px;top:919.0px;font-size:25.6px;font-weight:400;color:#3c505b;transform:scaleX(1.0779);">Apple Picking</div>
<div class="t" style="left:659.00px;top:904.2px;font-size:25.6px;font-weight:400;color:#3c505b;transform:scaleX(1.0738);clip-path:inset(-20px -20px -20px 0.0px);text-decoration:underline;text-decoration-thickness:5px;text-underline-offset:3px;text-decoration-color:rgba(74,157,141,0.13);">Apple</div>
<div class="t" style="left:657.93px;top:933.0px;font-size:25.6px;font-weight:400;color:#3c505b;transform:scaleX(1.0658);clip-path:inset(-20px -20px -20px 0.7px);text-decoration:underline;text-decoration-thickness:5px;text-underline-offset:3px;text-decoration-color:rgba(74,157,141,0.13);">Orchards Ltd</div>
<div class="t" style="left:835.44px;top:904.2px;font-size:25.6px;font-weight:400;color:#3c505b;transform:scaleX(1.0306);clip-path:inset(-20px -20px -20px 1.7px);text-decoration:underline;text-decoration-thickness:5px;text-underline-offset:3px;text-decoration-color:rgba(74,157,141,0.13);">East</div>
<div class="t" style="left:836.45px;top:933.0px;font-size:25.6px;font-weight:400;color:#3c505b;transform:scaleX(1.0510);clip-path:inset(-20px -20px -20px 0.7px);text-decoration:underline;text-decoration-thickness:5px;text-underline-offset:3px;text-decoration-color:rgba(74,157,141,0.13);">Orchards</div>
<div class="t" style="left:1013.28px;top:919.0px;font-size:25.6px;font-weight:400;color:#3c505b;transform:scaleX(1.0086);clip-path:inset(-20px -20px -20px 1.7px);text-decoration:underline;text-decoration-thickness:5px;text-underline-offset:3px;text-decoration-color:rgba(74,157,141,0.13);">Block 1</div>
<div class="t" style="left:1213.34px;top:904.2px;font-size:25.6px;font-weight:400;color:#3c505b;transform:scaleX(1.0564);">08:00 -</div>
<div class="t" style="left:1212.56px;top:933.0px;font-size:25.6px;font-weight:400;color:#3c505b;transform:scaleX(0.9197);">16:30</div>
<div class="t" style="left:1370.31px;top:919.0px;font-size:25.6px;font-weight:400;color:#3c505b;transform:scaleX(0.9912);">0.5</div>
<div class="t" style="left:1484.80px;top:919.0px;font-size:25.6px;font-weight:400;color:#3c505b;transform:scaleX(1.2000);">8</div>
<div class="t" style="left:1599.39px;top:919.0px;font-size:25.6px;font-weight:400;color:#3c505b;transform:scaleX(0.9118);">7.6</div>
<div class="t" style="left:1714.80px;top:919.0px;font-size:25.6px;font-weight:400;color:#3c505b;transform:scaleX(0.9416);">$12.00</div>
<div class="t" style="left:1965.00px;top:919.0px;font-size:25.6px;font-weight:400;color:#3c505b;transform:scaleX(0.8789);">$11.40</div>
<div class="t" style="left:1828.14px;top:919.0px;font-size:25.6px;font-weight:400;color:#3c505b;transform:scaleX(1.0635);">Contract</div>
<div class="t" style="left:38.93px;top:1040.2px;font-size:25.6px;font-weight:700;color:#3c505b;transform:scaleX(1.0732);-webkit-text-stroke:0.35px #3c505b;">14/04/2025</div>
<div class="t" style="left:215.90px;top:1041.0px;font-size:25.6px;font-weight:400;color:#3c505b;transform:scaleX(1.0489);clip-path:inset(-20px -20px -20px 1.7px);text-decoration:underline;text-decoration-thickness:5px;text-underline-offset:3px;text-decoration-color:rgba(74,157,141,0.13);">Everette Emery</div>
<div class="t" style="left:417.30px;top:1041.0px;font-size:25.6px;font-weight:400;color:#3c505b;transform:scaleX(1.0779);">Apple Picking</div>
<div class="t" style="left:659.00px;top:1026.2px;font-size:25.6px;font-weight:400;color:#3c505b;transform:scaleX(1.0738);clip-path:inset(-20px -20px -20px 0.0px);text-decoration:underline;text-decoration-thickness:5px;text-underline-offset:3px;text-decoration-color:rgba(74,157,141,0.13);">Apple</div>
<div class="t" style="left:657.93px;top:1055.0px;font-size:25.6px;font-weight:400;color:#3c505b;transform:scaleX(1.0658);clip-path:inset(-20px -20px -20px 0.7px);text-decoration:underline;text-decoration-thickness:5px;text-underline-offset:3px;text-decoration-color:rgba(74,157,141,0.13);">Orchards Ltd</div>
<div class="t" style="left:835.44px;top:1026.2px;font-size:25.6px;font-weight:400;color:#3c505b;transform:scaleX(1.0306);clip-path:inset(-20px -20px -20px 1.7px);text-decoration:underline;text-decoration-thickness:5px;text-underline-offset:3px;text-decoration-color:rgba(74,157,141,0.13);">East</div>
<div class="t" style="left:836.45px;top:1055.0px;font-size:25.6px;font-weight:400;color:#3c505b;transform:scaleX(1.0510);clip-path:inset(-20px -20px -20px 0.7px);text-decoration:underline;text-decoration-thickness:5px;text-underline-offset:3px;text-decoration-color:rgba(74,157,141,0.13);">Orchards</div>
<div class="t" style="left:1013.28px;top:1041.0px;font-size:25.6px;font-weight:400;color:#3c505b;transform:scaleX(1.0086);clip-path:inset(-20px -20px -20px 1.7px);text-decoration:underline;text-decoration-thickness:5px;text-underline-offset:3px;text-decoration-color:rgba(74,157,141,0.13);">Block 1</div>
<div class="t" style="left:1213.34px;top:1026.2px;font-size:25.6px;font-weight:400;color:#3c505b;transform:scaleX(1.0564);">08:00 -</div>
<div class="t" style="left:1212.56px;top:1055.0px;font-size:25.6px;font-weight:400;color:#3c505b;transform:scaleX(0.9197);">16:30</div>
<div class="t" style="left:1370.31px;top:1041.0px;font-size:25.6px;font-weight:400;color:#3c505b;transform:scaleX(0.9912);">0.5</div>
<div class="t" style="left:1484.80px;top:1041.0px;font-size:25.6px;font-weight:400;color:#3c505b;transform:scaleX(1.2000);">8</div>
<div class="t" style="left:1599.39px;top:1041.0px;font-size:25.6px;font-weight:400;color:#3c505b;transform:scaleX(0.9118);">7.6</div>
<div class="t" style="left:1714.80px;top:1041.0px;font-size:25.6px;font-weight:400;color:#3c505b;transform:scaleX(0.9416);">$12.00</div>
<div class="t" style="left:1965.00px;top:1041.0px;font-size:25.6px;font-weight:400;color:#3c505b;transform:scaleX(0.8789);">$11.40</div>
<div class="t" style="left:1828.14px;top:1041.0px;font-size:25.6px;font-weight:400;color:#3c505b;transform:scaleX(1.0635);">Contract</div>
<div class="t" style="left:38.93px;top:1162.2px;font-size:25.6px;font-weight:700;color:#3c505b;transform:scaleX(1.0732);-webkit-text-stroke:0.35px #3c505b;">14/04/2025</div>
<div class="t" style="left:215.76px;top:1148.2px;font-size:25.6px;font-weight:400;color:#3c505b;transform:scaleX(1.1184);clip-path:inset(-20px -20px -20px 1.7px);text-decoration:underline;text-decoration-thickness:5px;text-underline-offset:3px;text-decoration-color:rgba(74,157,141,0.13);">Fred</div>
<div class="t" style="left:215.86px;top:1177.0px;font-size:25.6px;font-weight:400;color:#3c505b;transform:scaleX(1.0690);clip-path:inset(-20px -20px -20px 1.7px);text-decoration:underline;text-decoration-thickness:5px;text-underline-offset:3px;text-decoration-color:rgba(74,157,141,0.13);">Frederickson</div>
<div class="t" style="left:417.30px;top:1163.0px;font-size:25.6px;font-weight:400;color:#3c505b;transform:scaleX(1.0779);">Apple Picking</div>
<div class="t" style="left:659.00px;top:1148.2px;font-size:25.6px;font-weight:400;color:#3c505b;transform:scaleX(1.0738);clip-path:inset(-20px -20px -20px 0.0px);text-decoration:underline;text-decoration-thickness:5px;text-underline-offset:3px;text-decoration-color:rgba(74,157,141,0.13);">Apple</div>
<div class="t" style="left:657.93px;top:1177.0px;font-size:25.6px;font-weight:400;color:#3c505b;transform:scaleX(1.0658);clip-path:inset(-20px -20px -20px 0.7px);text-decoration:underline;text-decoration-thickness:5px;text-underline-offset:3px;text-decoration-color:rgba(74,157,141,0.13);">Orchards Ltd</div>
<div class="t" style="left:835.44px;top:1148.2px;font-size:25.6px;font-weight:400;color:#3c505b;transform:scaleX(1.0306);clip-path:inset(-20px -20px -20px 1.7px);text-decoration:underline;text-decoration-thickness:5px;text-underline-offset:3px;text-decoration-color:rgba(74,157,141,0.13);">East</div>
<div class="t" style="left:836.45px;top:1177.0px;font-size:25.6px;font-weight:400;color:#3c505b;transform:scaleX(1.0510);clip-path:inset(-20px -20px -20px 0.7px);text-decoration:underline;text-decoration-thickness:5px;text-underline-offset:3px;text-decoration-color:rgba(74,157,141,0.13);">Orchards</div>
<div class="t" style="left:1013.28px;top:1163.0px;font-size:25.6px;font-weight:400;color:#3c505b;transform:scaleX(1.0086);clip-path:inset(-20px -20px -20px 1.7px);text-decoration:underline;text-decoration-thickness:5px;text-underline-offset:3px;text-decoration-color:rgba(74,157,141,0.13);">Block 1</div>
<div class="t" style="left:1213.34px;top:1148.2px;font-size:25.6px;font-weight:400;color:#3c505b;transform:scaleX(1.0564);">08:00 -</div>
<div class="t" style="left:1212.56px;top:1177.0px;font-size:25.6px;font-weight:400;color:#3c505b;transform:scaleX(0.9197);">16:30</div>
<div class="t" style="left:1370.31px;top:1163.0px;font-size:25.6px;font-weight:400;color:#3c505b;transform:scaleX(0.9912);">0.5</div>
<div class="t" style="left:1484.80px;top:1163.0px;font-size:25.6px;font-weight:400;color:#3c505b;transform:scaleX(1.2000);">8</div>
<div class="t" style="left:1599.39px;top:1163.0px;font-size:25.6px;font-weight:400;color:#3c505b;transform:scaleX(0.9118);">7.6</div>
<div class="t" style="left:1714.80px;top:1163.0px;font-size:25.6px;font-weight:400;color:#3c505b;transform:scaleX(0.9416);">$12.00</div>
<div class="t" style="left:1965.00px;top:1163.0px;font-size:25.6px;font-weight:400;color:#3c505b;transform:scaleX(0.8789);">$11.40</div>
<div class="t" style="left:1828.14px;top:1163.0px;font-size:25.6px;font-weight:400;color:#3c505b;transform:scaleX(1.0635);">Contract</div>
<div class="t" style="left:38.90px;top:1284.2px;font-size:25.6px;font-weight:700;color:#3c505b;transform:scaleX(1.0992);-webkit-text-stroke:0.35px #3c505b;">30/04/2025</div>
<div class="t" style="left:218.00px;top:1270.2px;font-size:25.6px;font-weight:400;color:#3c505b;transform:scaleX(1.0917);clip-path:inset(-20px -20px -20px 0.0px);text-decoration:underline;text-decoration-thickness:5px;text-underline-offset:3px;text-decoration-color:rgba(74,157,141,0.13);">Wihelmina</div>
<div class="t" style="left:218.00px;top:1299.0px;font-size:25.6px;font-weight:400;color:#3c505b;transform:scaleX(1.0800);clip-path:inset(-20px -20px -20px 0.0px);text-decoration:underline;text-decoration-thickness:5px;text-underline-offset:3px;text-decoration-color:rgba(74,157,141,0.13);">Wilson</div>
<div class="t" style="left:415.21px;top:1285.0px;font-size:25.6px;font-weight:400;color:#3c505b;transform:scaleX(1.0469);">Klima Cut - 4 Cane</div>
<div class="t" style="left:659.00px;top:1270.2px;font-size:25.6px;font-weight:400;color:#3c505b;transform:scaleX(1.0309);clip-path:inset(-20px -20px -20px 0.0px);text-decoration:underline;text-decoration-thickness:5px;text-underline-offset:3px;text-decoration-color:rgba(74,157,141,0.13);">Wine Grapes</div>
<div class="t" style="left:656.59px;top:1299.0px;font-size:25.6px;font-weight:400;color:#3c505b;transform:scaleX(1.2063);clip-path:inset(-20px -20px -20px 1.7px);text-decoration:underline;text-decoration-thickness:5px;text-underline-offset:3px;text-decoration-color:rgba(74,157,141,0.13);">Ltd</div>
<div class="t" style="left:837.50px;top:1270.2px;font-size:25.6px;font-weight:400;color:#3c505b;transform:scaleX(1.0310);clip-path:inset(-20px -20px -20px 0.0px);text-decoration:underline;text-decoration-thickness:5px;text-underline-offset:3px;text-decoration-color:rgba(74,157,141,0.13);">West</div>
<div class="t" style="left:837.50px;top:1299.0px;font-size:25.6px;font-weight:400;color:#3c505b;transform:scaleX(1.0465);clip-path:inset(-20px -20px -20px 0.0px);text-decoration:underline;text-decoration-thickness:5px;text-underline-offset:3px;text-decoration-color:rgba(74,157,141,0.13);">Vineyard</div>
<div class="t" style="left:1013.20px;top:1285.0px;font-size:25.6px;font-weight:400;color:#3c505b;transform:scaleX(1.0494);clip-path:inset(-20px -20px -20px 1.7px);text-decoration:underline;text-decoration-thickness:5px;text-underline-offset:3px;text-decoration-color:rgba(74,157,141,0.13);">Block 2</div>
<div class="t" style="left:1213.34px;top:1270.2px;font-size:25.6px;font-weight:400;color:#3c505b;transform:scaleX(1.0564);">08:00 -</div>
<div class="t" style="left:1212.43px;top:1299.0px;font-size:25.6px;font-weight:400;color:#3c505b;transform:scaleX(0.9836);">10:00</div>
<div class="t" style="left:1371.30px;top:1285.0px;font-size:25.6px;font-weight:400;color:#3c505b;transform:scaleX(0.9231);">—</div>
<div class="t" style="left:1484.96px;top:1285.0px;font-size:25.6px;font-weight:400;color:#3c505b;transform:scaleX(1.0417);">2</div>
<div class="t" style="left:1598.45px;top:1285.0px;font-size:25.6px;font-weight:400;color:#3c505b;transform:scaleX(0.9269);">10</div>
<div class="t" style="left:1714.80px;top:1285.0px;font-size:25.6px;font-weight:400;color:#3c505b;transform:scaleX(1.0159);">$0.82</div>
<div class="t" style="left:1965.00px;top:1285.0px;font-size:25.6px;font-weight:400;color:#3c505b;transform:scaleX(0.9381);">$4.10</div>
<div class="t" style="left:1828.14px;top:1285.0px;font-size:25.6px;font-weight:400;color:#3c505b;transform:scaleX(1.0635);">Contract</div>
<div class="t" style="left:38.94px;top:1406.2px;font-size:25.6px;font-weight:700;color:#3c505b;transform:scaleX(1.0551);-webkit-text-stroke:0.35px #3c505b;">12/04/2025</div>
<div class="t" style="left:218.00px;top:1407.0px;font-size:25.6px;font-weight:400;color:#3c505b;transform:scaleX(1.0777);clip-path:inset(-20px -20px -20px 0.0px);text-decoration:underline;text-decoration-thickness:5px;text-underline-offset:3px;text-decoration-color:rgba(74,157,141,0.13);">Aimee Adams</div>
<div class="t" style="left:417.30px;top:1407.0px;font-size:25.6px;font-weight:400;color:#3c505b;transform:scaleX(1.0779);">Apple Picking</div>
<div class="t" style="left:659.00px;top:1392.2px;font-size:25.6px;font-weight:400;color:#3c505b;transform:scaleX(1.0738);clip-path:inset(-20px -20px -20px 0.0px);text-decoration:underline;text-decoration-thickness:5px;text-underline-offset:3px;text-decoration-color:rgba(74,157,141,0.13);">Apple</div>
<div class="t" style="left:657.93px;top:1421.0px;font-size:25.6px;font-weight:400;color:#3c505b;transform:scaleX(1.0658);clip-path:inset(-20px -20px -20px 0.7px);text-decoration:underline;text-decoration-thickness:5px;text-underline-offset:3px;text-decoration-color:rgba(74,157,141,0.13);">Orchards Ltd</div>
<div class="t" style="left:837.50px;top:1392.2px;font-size:25.6px;font-weight:400;color:#3c505b;transform:scaleX(1.0310);clip-path:inset(-20px -20px -20px 0.0px);text-decoration:underline;text-decoration-thickness:5px;text-underline-offset:3px;text-decoration-color:rgba(74,157,141,0.13);">West</div>
<div class="t" style="left:836.45px;top:1421.0px;font-size:25.6px;font-weight:400;color:#3c505b;transform:scaleX(1.0510);clip-path:inset(-20px -20px -20px 0.7px);text-decoration:underline;text-decoration-thickness:5px;text-underline-offset:3px;text-decoration-color:rgba(74,157,141,0.13);">Orchards</div>
<div class="t" style="left:1013.28px;top:1407.0px;font-size:25.6px;font-weight:400;color:#3c505b;transform:scaleX(1.0086);clip-path:inset(-20px -20px -20px 1.7px);text-decoration:underline;text-decoration-thickness:5px;text-underline-offset:3px;text-decoration-color:rgba(74,157,141,0.13);">Block 1</div>
<div class="t" style="left:1213.34px;top:1392.2px;font-size:25.6px;font-weight:400;color:#3c505b;transform:scaleX(1.0564);">08:00 -</div>
<div class="t" style="left:1212.56px;top:1421.0px;font-size:25.6px;font-weight:400;color:#3c505b;transform:scaleX(0.9197);">16:30</div>
<div class="t" style="left:1370.31px;top:1407.0px;font-size:25.6px;font-weight:400;color:#3c505b;transform:scaleX(0.9912);">0.5</div>
<div class="t" style="left:1484.80px;top:1407.0px;font-size:25.6px;font-weight:400;color:#3c505b;transform:scaleX(1.2000);">8</div>
<div class="t" style="left:1598.53px;top:1407.0px;font-size:25.6px;font-weight:400;color:#3c505b;transform:scaleX(0.8872);">12.6</div>
<div class="t" style="left:1714.80px;top:1407.0px;font-size:25.6px;font-weight:400;color:#3c505b;transform:scaleX(0.9416);">$12.00</div>
<div class="t" style="left:1965.00px;top:1407.0px;font-size:25.6px;font-weight:400;color:#3c505b;transform:scaleX(0.9429);">$18.90</div>
<div class="t" style="left:1828.14px;top:1407.0px;font-size:25.6px;font-weight:400;color:#3c505b;transform:scaleX(1.0635);">Contract</div>
<div class="t" style="left:38.94px;top:1528.2px;font-size:25.6px;font-weight:700;color:#3c505b;transform:scaleX(1.0551);-webkit-text-stroke:0.35px #3c505b;">12/04/2025</div>
<div class="t" style="left:218.00px;top:1529.0px;font-size:25.6px;font-weight:400;color:#3c505b;transform:scaleX(1.0777);clip-path:inset(-20px -20px -20px 0.0px);text-decoration:underline;text-decoration-thickness:5px;text-underline-offset:3px;text-decoration-color:rgba(74,157,141,0.13);">Aimee Adams</div>
<div class="t" style="left:417.30px;top:1529.0px;font-size:25.6px;font-weight:400;color:#3c505b;transform:scaleX(1.0779);">Apple Picking</div>
<div class="t" style="left:659.00px;top:1514.2px;font-size:25.6px;font-weight:400;color:#3c505b;transform:scaleX(1.0738);clip-path:inset(-20px -20px -20px 0.0px);text-decoration:underline;text-decoration-thickness:5px;text-underline-offset:3px;text-decoration-color:rgba(74,157,141,0.13);">Apple</div>
<div class="t" style="left:657.93px;top:1543.0px;font-size:25.6px;font-weight:400;color:#3c505b;transform:scaleX(1.0658);clip-path:inset(-20px -20px -20px 0.7px);text-decoration:underline;text-decoration-thickness:5px;text-underline-offset:3px;text-decoration-color:rgba(74,157,141,0.13);">Orchards Ltd</div>
<div class="t" style="left:837.50px;top:1514.2px;font-size:25.6px;font-weight:400;color:#3c505b;transform:scaleX(1.0310);clip-path:inset(-20px -20px -20px 0.0px);text-decoration:underline;text-decoration-thickness:5px;text-underline-offset:3px;text-decoration-color:rgba(74,157,141,0.13);">West</div>
<div class="t" style="left:836.45px;top:1543.0px;font-size:25.6px;font-weight:400;color:#3c505b;transform:scaleX(1.0510);clip-path:inset(-20px -20px -20px 0.7px);text-decoration:underline;text-decoration-thickness:5px;text-underline-offset:3px;text-decoration-color:rgba(74,157,141,0.13);">Orchards</div>
<div class="t" style="left:1013.28px;top:1529.0px;font-size:25.6px;font-weight:400;color:#3c505b;transform:scaleX(1.0086);clip-path:inset(-20px -20px -20px 1.7px);text-decoration:underline;text-decoration-thickness:5px;text-underline-offset:3px;text-decoration-color:rgba(74,157,141,0.13);">Block 1</div>
<div class="t" style="left:1213.34px;top:1514.2px;font-size:25.6px;font-weight:400;color:#3c505b;transform:scaleX(1.0564);">08:00 -</div>
<div class="t" style="left:1212.56px;top:1543.0px;font-size:25.6px;font-weight:400;color:#3c505b;transform:scaleX(0.9197);">16:30</div>
<div class="t" style="left:1370.31px;top:1529.0px;font-size:25.6px;font-weight:400;color:#3c505b;transform:scaleX(0.9912);">0.5</div>
<div class="t" style="left:1484.80px;top:1529.0px;font-size:25.6px;font-weight:400;color:#3c505b;transform:scaleX(1.2000);">8</div>
<div class="t" style="left:1598.53px;top:1529.0px;font-size:25.6px;font-weight:400;color:#3c505b;transform:scaleX(0.8872);">12.6</div>
<div class="t" style="left:1714.80px;top:1529.0px;font-size:25.6px;font-weight:400;color:#3c505b;transform:scaleX(0.9416);">$12.00</div>
<div class="t" style="left:1965.00px;top:1529.0px;font-size:25.6px;font-weight:400;color:#3c505b;transform:scaleX(0.9429);">$18.90</div>
<div class="t" style="left:1828.14px;top:1529.0px;font-size:25.6px;font-weight:400;color:#3c505b;transform:scaleX(1.0635);">Contract</div>
<div style="left:0;top:1570px;width:24px;height:18px;background:#0d0d0d"></div>
<div style="left:2180px;top:1560px;width:26px;height:28px;background:#3a1538"></div>
<div style="left:0;top:1520px;width:2200px;height:68px;background:#3f545e;border-radius:0 0 12px 12px;z-index:0;border-left:1px solid #56676f;border-top:1px solid #36494f"></div>
<svg style="left:1780px;top:1545px" width="20" height="25" viewBox="1780 1545 20 25"><polygon fill="#a9b0b5" points="1785,1549 1793,1549 1793,1566 1788,1566 1788,1552.2 1785,1552.2"/></svg>
<svg style="left:1955px;top:1555px" width="30" height="16" viewBox="1955 1555 30 16"><g fill="#fff"><circle cx="1963.4" cy="1563.5" r="2.3"/><circle cx="1969.9" cy="1563.5" r="2.3"/><circle cx="1976.4" cy="1563.5" r="2.3"/></g></svg>
<svg style="left:2132.2px;top:1541.1px" width="34.6" height="34.6" viewBox="0 0 24 24"><path fill="#fff" d="M10 6L8.59 7.41 13.17 12l-4.58 4.59L10 18l6-6z"/></svg>
<div class="t" style="left:39.34px;top:1547.1px;font-size:21.8px;font-weight:700;color:#ffffff;transform:scaleX(0.9632);-webkit-text-stroke:0.35px #ffffff;">Showing 1-25 of 174</div>
<div class="t" style="left:1841.68px;top:1546.0px;font-size:24.7px;font-weight:700;color:#fff;transform:scaleX(1.2167);-webkit-text-stroke:0.35px #fff;">2</div>
<div class="t" style="left:1901.32px;top:1546.0px;font-size:24.7px;font-weight:700;color:#fff;transform:scaleX(1.1833);-webkit-text-stroke:0.35px #fff;">3</div>
<div class="t" style="left:2021.58px;top:1546.0px;font-size:24.7px;font-weight:700;color:#fff;transform:scaleX(1.2167);-webkit-text-stroke:0.35px #fff;">6</div>
<div class="t" style="left:2081.28px;top:1546.0px;font-size:24.7px;font-weight:700;color:#fff;transform:scaleX(1.2250);-webkit-text-stroke:0.35px #fff;">7</div>
<div class="t" style="left:1594.06px;top:520.3px;font-size:64.7px;font-weight:700;color:#e94ff0;transform:scaleX(0.9688);-webkit-text-stroke:0.35px #e94ff0;">2</div>
<div style="left:2200px;top:0;width:6px;height:1588px;background:#d3d3d3;border-left:1px solid #ababab;border-radius:0 0 10px 0"></div>
<div style="left:2200px;top:13px;width:6px;height:1px;background:#ababab"></div>
<svg style="left:0;top:0" width="2206" height="1588" viewBox="0 0 2206 1588"><line x1="1014.2" y1="229.5" x2="1090.5" y2="369" stroke="#e94ff0" stroke-width="8"/><polygon fill="#e94ff0" points="1068.4,379.9 1111.4,356 1114,411.6"/><path fill="#e94ff0" d="M988.5,247 L1000.3,247 L1000.3,294 L990.7,294 L990.7,261.5 Q985,266 978.5,267.6 L978.5,259.4 Q985.5,256 988.5,247 Z"/><path d="M1712,376 C1718,420 1700,470 1684,516" stroke="#e94ff0" stroke-width="8.7" fill="none"/><polygon fill="#e94ff0" points="1661,502.6 1705.3,522.2 1662.5,557"/></svg>
</body></html>
